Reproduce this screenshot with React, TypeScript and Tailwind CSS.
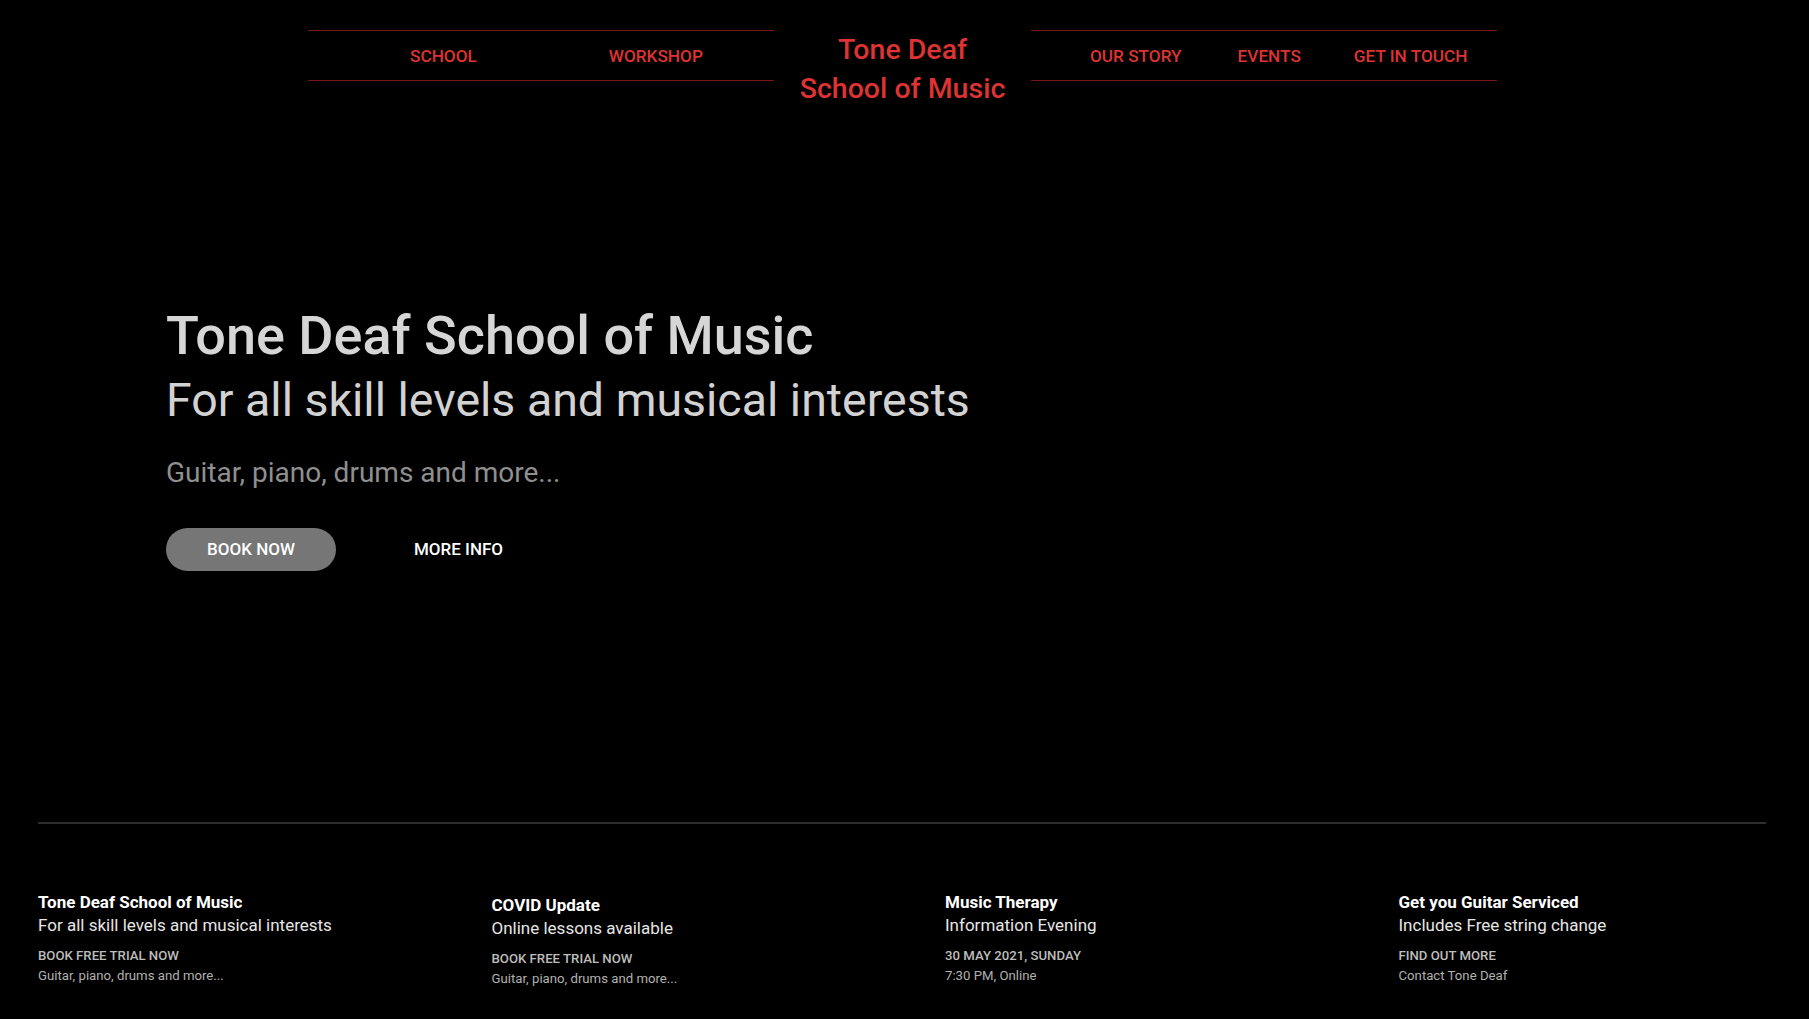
const leftLinks = ['SCHOOL', 'WORKSHOP'];
const rightLinks = [
  { label: 'OUR STORY', gap: '' },
  { label: 'EVENTS', gap: 'ml-[56px]' },
  { label: 'GET IN TOUCH', gap: 'ml-[53px]' },
];

const footerItems = [
  {
    title: 'Tone Deaf School of Music',
    subtitle: 'For all skill levels and musical interests',
    label: 'BOOK FREE TRIAL NOW',
    note: 'Guitar, piano, drums and more...',
    offset: false,
  },
  {
    title: 'COVID Update',
    subtitle: 'Online lessons available',
    label: 'BOOK FREE TRIAL NOW',
    note: 'Guitar, piano, drums and more...',
    offset: true,
  },
  {
    title: 'Music Therapy',
    subtitle: 'Information Evening',
    label: '30 MAY 2021, SUNDAY',
    note: '7:30 PM, Online',
    offset: false,
  },
  {
    title: 'Get you Guitar Serviced',
    subtitle: 'Includes Free string change',
    label: 'FIND OUT MORE',
    note: 'Contact Tone Deaf',
    offset: false,
  },
];

const Header = () => (
  <header className="flex items-start pl-[308px] pt-[30px]">
    {/* Left nav */}
    <nav className="flex h-[51px] w-[466px] items-center border-y border-[#7a1818] pl-[102px] pt-[2px]">
      <a className="text-[17.2px] font-medium text-[#dd3333]">{leftLinks[0]}</a>
      <a className="ml-[132px] text-[17.2px] font-medium text-[#dd3333]">{leftLinks[1]}</a>
    </nav>

    {/* Logo */}
    <div className="w-[257px] text-center text-[28.5px] font-medium leading-[39px] text-[#dd3333]">
      Tone Deaf
      <br />
      School of Music
    </div>

    {/* Right nav */}
    <nav className="flex h-[51px] w-[466px] items-center border-y border-[#7a1818] pl-[59px] pt-[2px]">
      {rightLinks.map((link) => (
        <a key={link.label} className={`text-[17.2px] font-medium text-[#dd3333] ${link.gap}`}>
          {link.label}
        </a>
      ))}
    </nav>
  </header>
);

const Hero = () => (
  <section className="pl-[166px] pt-[195px]">
    <h1 className="text-[54px] font-medium leading-[65px] text-[#d6d6d6]">Tone Deaf School of Music</h1>
    <h2 className="mt-[5px] text-[46.5px] leading-[55px] text-[#d2d2d2]">
      For all skill levels and musical interests
    </h2>
    <p className="mt-[28px] text-[28px] leading-[34px] text-[#8f8f8f]">Guitar, piano, drums and more...</p>
    <div className="mt-[38px] flex items-center">
      <button className="flex h-[43px] w-[170px] items-center justify-center rounded-full bg-[#767676] text-[17px] font-medium text-white">
        BOOK NOW
      </button>
      <button className="ml-[78px] text-[17px] font-medium text-white">MORE INFO</button>
    </div>
  </section>
);

const Footer = () => (
  <footer className="mt-[251px] pb-[33px]">
    <div className="ml-[38px] mr-[43px] h-[2px] bg-[#2e2e2e]" />
    <div className="flex pt-[67px]">
      {footerItems.map((item) => (
        <div key={item.title} className={`w-[453.5px] shrink-0 pl-[38px] ${item.offset ? 'pt-[3px]' : ''}`}>
          <h3 className="text-[17px] font-bold leading-[23px] text-white">{item.title}</h3>
          <p className="text-[17px] leading-[23px] text-[#e6e6e6]">{item.subtitle}</p>
          <p className="mt-[9px] text-[13.2px] font-medium leading-[20px] text-[#bdbdbd]">{item.label}</p>
          <p className="text-[13.2px] leading-[20px] text-[#b0b0b0]">{item.note}</p>
        </div>
      ))}
    </div>
  </footer>
);

export default function App() {
  return (
    <div className="min-h-screen overflow-hidden bg-black font-['Roboto',sans-serif]">
      <Header />
      <Hero />
      <Footer />
    </div>
  );
}
